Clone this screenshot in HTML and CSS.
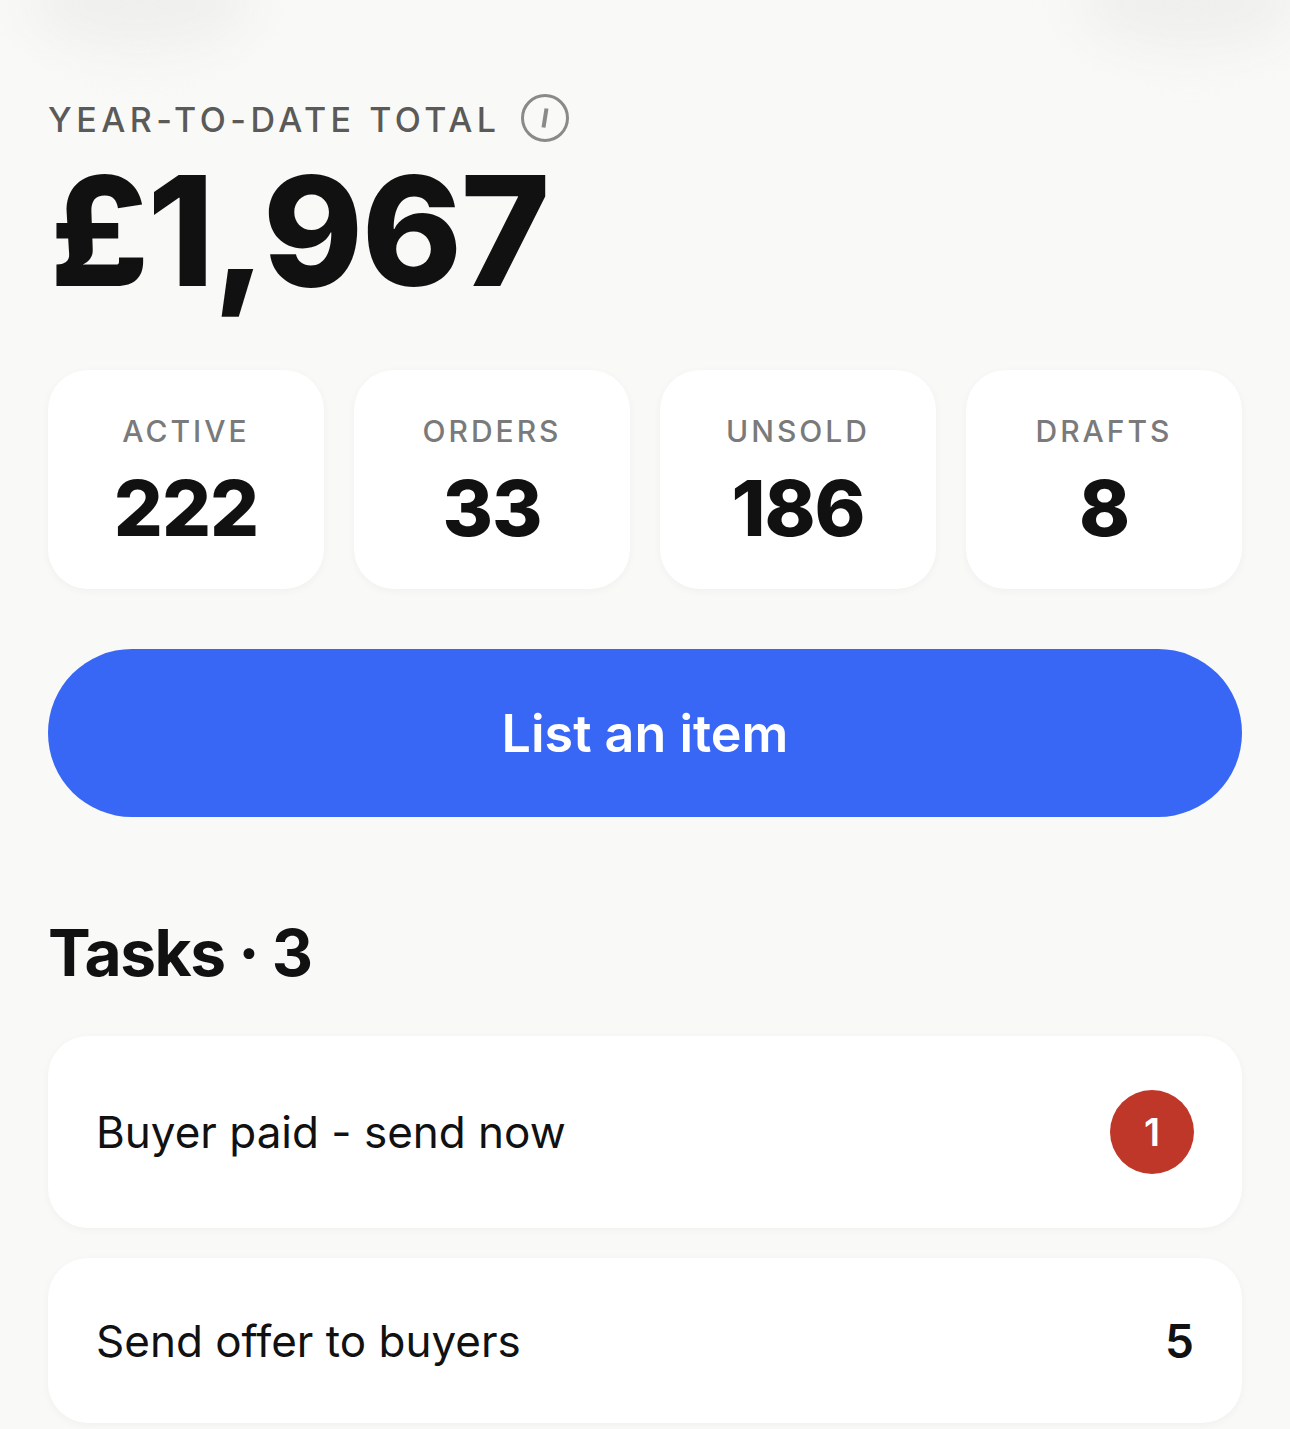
FILE: index.html
```html
<!DOCTYPE html>
<html lang="en">
<head>
    <meta charset="UTF-8">
    <meta name="viewport" content="width=device-width, initial-scale=1.0">
    <title>Seller hub</title>
    <link rel="stylesheet" href="styles.css">
</head>
<body>
    <div class="page">
        <div class="smudge smudge-left"></div>
        <div class="smudge smudge-right"></div>

        <div class="total-head">
            <span class="total-label">YEAR-TO-DATE TOTAL</span>
            <span class="info-icon">
                <svg width="48" height="48" viewBox="0 0 48 48" fill="none">
                    <circle cx="24" cy="24" r="22.5" stroke="#8a8a88" stroke-width="3"/>
                    <path d="M25.5 14.5 L22.5 33.5" stroke="#8a8a88" stroke-width="4"/>
                </svg>
            </span>
        </div>
        <div class="total-value">£1,967</div>

        <div class="stats">
            <div class="stat">
                <div class="stat-label">ACTIVE</div>
                <div class="stat-value">222</div>
            </div>
            <div class="stat">
                <div class="stat-label">ORDERS</div>
                <div class="stat-value">33</div>
            </div>
            <div class="stat">
                <div class="stat-label">UNSOLD</div>
                <div class="stat-value">186</div>
            </div>
            <div class="stat">
                <div class="stat-label">DRAFTS</div>
                <div class="stat-value">8</div>
            </div>
        </div>

        <button class="btn">List an item</button>

        <h2 class="tasks-title">Tasks · 3</h2>

        <div class="task task-tall">
            <span class="task-name">Buyer paid - send now</span>
            <span class="badge">1</span>
        </div>
        <div class="task">
            <span class="task-name">Send offer to buyers</span>
            <span class="task-count">5</span>
        </div>
    </div>
</body>
</html>
```

FILE: styles.css
```css
html, body {
    margin: 0;
    height: 100%;
    overflow: hidden;
}

body {
    font-family: Inter, "Noto Sans", sans-serif;
    background-color: #f9f9f7;
    color: #111;
}

.page {
    position: relative;
    height: 1429px;
    padding: 94px 48px 0;
    box-sizing: border-box;
    overflow: hidden;
}

.smudge {
    position: absolute;
    top: -50px;
    width: 220px;
    height: 100px;
    border-radius: 50%;
    background-color: #efefed;
    filter: blur(24px);
}

.smudge-left {
    left: 30px;
}

.smudge-right {
    left: 1080px;
}

.total-head {
    display: flex;
    align-items: center;
    height: 48px;
}

.total-label {
    font-size: 34px;
    font-weight: 500;
    letter-spacing: 4.5px;
    color: #5a5a58;
    padding-top: 2px;
}

.info-icon {
    display: flex;
    margin-left: 21px;
}

.total-value {
    font-size: 152px;
    font-weight: 800;
    letter-spacing: -1.5px;
    line-height: 176px;
    margin-top: 1px;
    margin-left: 2px;
}

.stats {
    display: grid;
    grid-template-columns: repeat(4, 1fr);
    gap: 30px;
    margin-top: 51px;
}

.stat {
    height: 219px;
    padding-top: 43px;
    box-sizing: border-box;
    background-color: #fff;
    border-radius: 40px;
    box-shadow: 0 2px 8px rgba(0, 0, 0, 0.04);
    text-align: center;
}

.stat-label {
    font-size: 30px;
    font-weight: 500;
    letter-spacing: 3px;
    line-height: 36px;
    color: #7a7a7a;
}

.stat-value {
    font-size: 77px;
    font-weight: 800;
    letter-spacing: -1px;
    line-height: 94px;
    margin-top: 12px;
}

.btn {
    display: block;
    width: 100%;
    height: 168px;
    margin-top: 60px;
    background-color: #3866f5;
    color: #fff;
    border: none;
    border-radius: 84px;
    font-family: inherit;
    font-size: 52px;
    font-weight: 600;
}

.tasks-title {
    font-size: 64px;
    font-weight: 700;
    letter-spacing: -1.5px;
    line-height: 78px;
    margin: 97px 0 44px 0;
}

.task {
    display: flex;
    align-items: center;
    justify-content: space-between;
    height: 165px;
    padding: 0 48px;
    background-color: #fff;
    border-radius: 40px;
    box-shadow: 0 2px 8px rgba(0, 0, 0, 0.04);
}

.task-tall {
    height: 192px;
    margin-bottom: 30px;
}

.task-name {
    font-size: 44px;
}

.badge {
    display: flex;
    align-items: center;
    justify-content: center;
    width: 84px;
    height: 84px;
    border-radius: 50%;
    background-color: #bf3729;
    color: #fff;
    font-size: 38px;
    font-weight: 600;
}

.task-count {
    font-size: 46px;
    font-weight: 600;
}
```
